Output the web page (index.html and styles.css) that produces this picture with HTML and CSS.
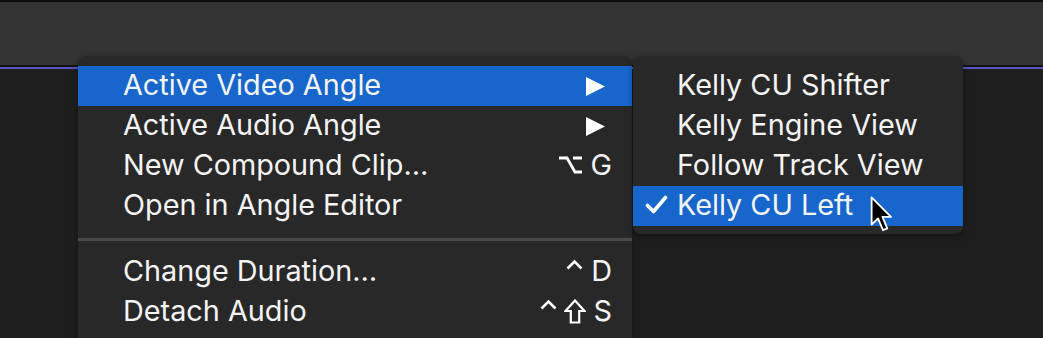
FILE: index.html
```html
<!DOCTYPE html>
<html lang="en">
<head>
    <meta charset="UTF-8">
    <meta name="viewport" content="width=device-width, initial-scale=1.0">
    <title>Angle Menu</title>
    <link rel="stylesheet" href="styles.css">
</head>
<body>
    <div class="app">
        <div class="toolbar"></div>
        <div class="rule"></div>
        <div class="viewer"></div>
    </div>

    <div class="menus">
        <ul class="menu main-menu">
            <li class="item active">
                <span class="label">Active Video Angle</span>
                <svg class="arrow" width="19" height="19" viewBox="0 0 19 19"><polygon points="0,0 19,9.5 0,19" fill="#fff"/></svg>
            </li>
            <li class="item">
                <span class="label">Active Audio Angle</span>
                <svg class="arrow" width="19" height="19" viewBox="0 0 19 19"><polygon points="0,0 19,9.5 0,19" fill="#fff"/></svg>
            </li>
            <li class="item">
                <span class="label">New Compound Clip…</span>
                <span class="keys">
                    <svg class="sym" width="24" height="18" viewBox="0 0 24 18"><path d="M0 2 H8 L16 16 H23 M14 2 H23" fill="none" stroke="#fff" stroke-width="2.8"/></svg>
                    <span class="key-letter">G</span>
                </span>
            </li>
            <li class="item">
                <span class="label">Open in Angle Editor</span>
            </li>
            <li class="separator"></li>
            <li class="item">
                <span class="label">Change Duration…</span>
                <span class="keys">
                    <svg class="sym ctrl" width="17" height="11" viewBox="0 0 17 11"><path d="M1.5 9.5 L8.5 2.5 L15.5 9.5" fill="none" stroke="#fff" stroke-width="2.6"/></svg>
                    <span class="key-letter">D</span>
                </span>
            </li>
            <li class="item">
                <span class="label">Detach Audio</span>
                <span class="keys">
                    <svg class="sym ctrl" width="17" height="11" viewBox="0 0 17 11"><path d="M1.5 9.5 L8.5 2.5 L15.5 9.5" fill="none" stroke="#fff" stroke-width="2.6"/></svg>
                    <svg class="sym shift" width="22" height="25" viewBox="0 0 22 25"><path d="M11 1.5 L20.5 12 H15.2 V23.5 H6.8 V12 H1.5 Z" fill="none" stroke="#fff" stroke-width="2.2"/></svg>
                    <span class="key-letter">S</span>
                </span>
            </li>
        </ul>

        <ul class="menu sub-menu">
            <li class="item"><span class="check"></span><span class="label">Kelly CU Shifter</span></li>
            <li class="item"><span class="check"></span><span class="label">Kelly Engine View</span></li>
            <li class="item"><span class="check"></span><span class="label">Follow Track View</span></li>
            <li class="item active">
                <span class="check"><svg width="23" height="19" viewBox="0 0 23 19"><path d="M2.5 10.5 L8.5 16.5 L20.5 2.5" fill="none" stroke="#fff" stroke-width="3.6" stroke-linecap="round" stroke-linejoin="round"/></svg></span>
                <span class="label">Kelly CU Left</span>
            </li>
        </ul>
    </div>

    <!-- mouse pointer sitting over the checked angle -->
    <svg class="cursor" width="26" height="37" viewBox="0 0 18 26">
        <path d="M1 1 L1 20 L5.5 15.8 L9 24 L12 22.7 L8.6 14.7 L14.6 14.7 Z" fill="#000" stroke="#fff" stroke-width="1.3" stroke-linejoin="round"/>
    </svg>
</body>
</html>
```

FILE: styles.css
```css
* {
    box-sizing: border-box;
}
body {
    margin: 0;
    height: 338px;
    overflow: hidden;
    background: #1e1e1e;
    font-family: Inter, "Liberation Sans", Arial, sans-serif;
    color: #f4f4f4;
}
.app {
    display: flex;
    flex-direction: column;
    height: 338px;
}
.toolbar {
    height: 65px;
    background: #333333;
    border-top: 2px solid #0c0c0c;
}
.rule {
    height: 4px;
    background: #131313;
    border-bottom: 2px solid #5856c0;
}
.viewer {
    flex: 1;
    background: #1e1e1e;
}
.menus {
    position: absolute;
    left: 78px;
    top: 56px;
    display: flex;
    align-items: flex-start;
    gap: 1px;
}
.menu {
    list-style: none;
    margin: 0;
    background: #282828;
    border-radius: 8px;
    box-shadow: 0 2px 6px rgba(0,0,0,0.35);
}
.main-menu {
    width: 554px;
    padding: 10px 0 20px;
    border-radius: 8px 8px 0 0;
}
.sub-menu {
    width: 330px;
    padding: 10px 0 8px;
}
.item {
    display: flex;
    align-items: center;
    height: 40px;
    padding: 0 20px 3px 45px;
    font-size: 28.8px;
    line-height: 34px;
    white-space: nowrap;
}
.item.active {
    background: #1766cb;
}
.sub-menu .item {
    padding-left: 12px;
    padding-right: 0;
}
.check {
    display: inline-flex;
    width: 32px;
    height: 19px;
}
.arrow {
    margin-left: auto;
    margin-right: 7px;
    margin-top: 3px;
}
.keys {
    margin-left: auto;
    display: flex;
    align-items: center;
    gap: 7px;
}
.key-letter {
    width: 22px;
    text-align: right;
}
.sym.ctrl {
    margin-top: -12px;
}
.sym.shift {
    margin-right: -3px;
    margin-top: 2px;
}
.separator {
    height: 26px;
    padding-top: 12px;
}
.separator::before {
    content: "";
    display: block;
    height: 3px;
    background: #4a4a4a;
}
.cursor {
    position: absolute;
    left: 870px;
    top: 196px;
}
```
